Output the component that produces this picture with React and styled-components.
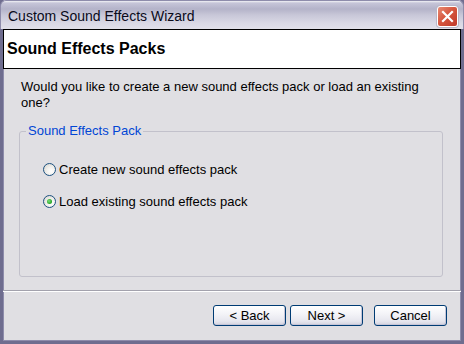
import styled, { createGlobalStyle } from 'styled-components';

const GlobalStyle = createGlobalStyle`
    html, body {
        margin: 0;
        padding: 0;
        background: #ffffff;
    }
    * {
        box-sizing: border-box;
    }
`;

const Window = styled.div`
    width: 464px;
    height: 344px;
    display: flex;
    flex-direction: column;
    background: #e0dfe3;
    border: 3px solid #6f6d8f;
    border-top: 0;
    box-shadow: inset 1px 0 0 #8e8cab, inset -1px 0 0 #8e8cab, inset 0 -1px 0 #8e8cab;
    font-family: 'Liberation Sans', Arial, sans-serif;
    font-size: 13px;
    color: #000;
`;

const TitleBar = styled.div`
    height: 29px;
    margin: 0 -3px;
    padding: 0 5px 0 7px;
    display: flex;
    align-items: center;
    justify-content: space-between;
    background: linear-gradient(
        to bottom,
        #f2f2f6 0px,
        #c6c5d8 2px,
        #b4b3c9 8px,
        #c8c7d8 14px,
        #d9d8e4 22px,
        #e2e1ea 29px
    );
    border-radius: 6px 6px 0 0;
    border: 1px solid #8e8cab;
    border-bottom: 0;
`;

const Title = styled.span`
    font-size: 14px;
    color: #0a0a1a;
    padding-top: 2px;
`;

const CloseButton = styled.div`
    width: 21px;
    height: 21px;
    margin-top: 2px;
    border-radius: 3px;
    border: 1px solid #ffffff;
    box-shadow: 0 0 0 1px #b8b7c8;
    background: linear-gradient(135deg, #e88b74 0%, #d6573f 45%, #c0392a 100%);
    display: flex;
    align-items: center;
    justify-content: center;
`;

const Header = styled.div`
    height: 40px;
    background: #ffffff;
    border: 1px solid #000000;
    display: flex;
    align-items: center;
    padding-left: 3px;
    font-size: 16px;
    font-weight: bold;
`;

const Body = styled.div`
    flex: 1;
    display: flex;
    flex-direction: column;
    padding: 10px 18px 13px 16px;
`;

const Question = styled.p`
    margin: 0 0 13px 2px;
    line-height: 16px;
    padding-right: 4px;
`;

const Group = styled.fieldset`
    flex: 1;
    margin: 0;
    padding: 23px 0 0 0;
    border: 1px solid #c2c1cb;
    border-radius: 3px;
    display: flex;
    flex-direction: column;
    gap: 16px;
`;

const Legend = styled.legend`
    color: #0046d5;
    padding: 0 2px;
    margin-left: 6px;
    line-height: 14px;
`;

const Option = styled.label`
    display: flex;
    align-items: center;
    gap: 3px;
    height: 16px;
    margin-left: 23px;
`;

const Radio = styled.span`
    width: 13px;
    height: 13px;
    border-radius: 50%;
    border: 1px solid #1c5180;
    background: radial-gradient(circle at 65% 65%, #ffffff 0%, #f2f1ee 40%, #d4d1c9 100%);
    display: flex;
    align-items: center;
    justify-content: center;

    &::after {
        content: '';
        width: 5px;
        height: 5px;
        border-radius: 50%;
        background: radial-gradient(circle at 40% 40%, #7be07b, #21a121 70%);
        display: ${(p) => (p.checked ? 'block' : 'none')};
    }
`;

const Separator = styled.div`
    border-top: 1px solid #a3a2ad;
    border-bottom: 1px solid #ffffff;
`;

const Footer = styled.div`
    height: 49px;
    display: flex;
    justify-content: flex-end;
    align-items: flex-start;
    padding: 13px 14px 0 0;
`;

const Button = styled.button`
    width: 73px;
    height: 21px;
    margin-left: ${(p) => (p.$gap ? '11px' : '4px')};
    padding: 0;
    border: 1px solid #003c74;
    border-radius: 3px;
    background: linear-gradient(to bottom, #ffffff 0%, #f4f4f8 40%, #e6e6ee 80%, #d2d2de 100%);
    box-shadow: inset -1px -1px 0 #c6c5d7;
    font-family: 'Liberation Sans', Arial, sans-serif;
    font-size: 13px;
    color: #000;
`;

const CloseIcon = () => (
    <svg width="13" height="13" viewBox="0 0 13 13">
        <path d="M2 2 L11 11 M11 2 L2 11" stroke="#ffffff" strokeWidth="2.2" strokeLinecap="square" />
    </svg>
);

const App = () => {
    return (
        <>
            <GlobalStyle />
            <Window>
                <TitleBar>
                    <Title>Custom Sound Effects Wizard</Title>
                    <CloseButton>
                        <CloseIcon />
                    </CloseButton>
                </TitleBar>
                <Header>Sound Effects Packs</Header>
                <Body>
                    <Question>
                        Would you like to create a new sound effects pack or load an existing one?
                    </Question>
                    <Group>
                        <Legend>Sound Effects Pack</Legend>
                        <Option>
                            <Radio />
                            Create new sound effects pack
                        </Option>
                        <Option>
                            <Radio checked />
                            Load existing sound effects pack
                        </Option>
                    </Group>
                </Body>
                <Separator />
                <Footer>
                    <Button>&lt; Back</Button>
                    <Button>Next &gt;</Button>
                    <Button $gap>Cancel</Button>
                </Footer>
            </Window>
        </>
    );
};

export default App;
